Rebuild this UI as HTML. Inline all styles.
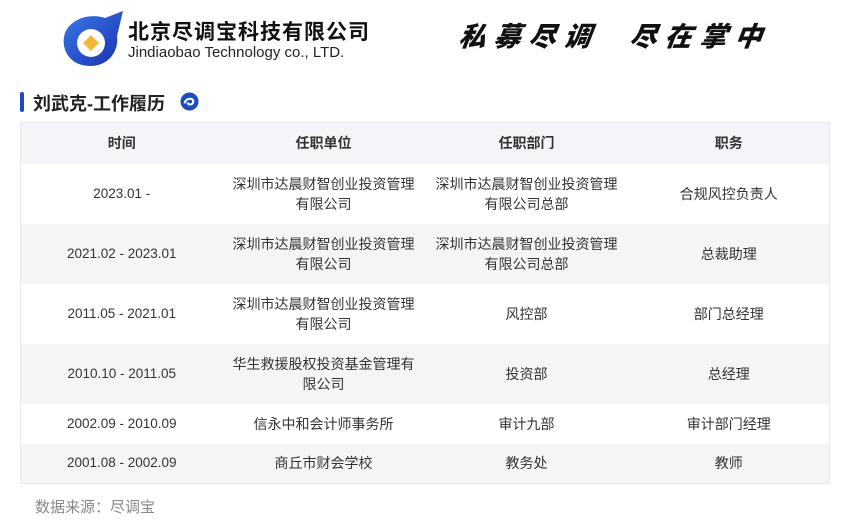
<!DOCTYPE html>
<html><head><meta charset="utf-8"><style>
*{margin:0;padding:0;box-sizing:border-box}
body{width:850px;height:525px;background:#fff;font-family:"Liberation Sans","Noto Sans CJK SC",sans-serif;color:#333;position:relative;overflow:hidden}
.abs{position:absolute;white-space:nowrap}
table{position:absolute;left:20px;top:122px;width:810px;border-collapse:collapse;border:1px solid #e8eaef;font-size:14px}
td,th{text-align:center;vertical-align:middle;line-height:20px;padding:0 4px}
th{height:41px;background:#f4f5f9;font-weight:bold;font-size:14px;color:#333}
tr.r{height:60px}tr.s{height:40px}
tr.g{background:#f5f5f5}
td:nth-child(1){width:202px;font-size:13.5px}td:nth-child(2){width:202px}td:nth-child(3){width:204px}
</style></head><body>
<svg class="abs" style="left:61px;top:10px" width="64" height="58" viewBox="0 0 64 58">
<defs><linearGradient id="lg" x1="0" y1="0" x2="1" y2="1"><stop offset="0" stop-color="#3a7be8"/><stop offset="1" stop-color="#1a2fb0"/></linearGradient></defs>
<path d="M62 1 L44 8 C30 3 10 8 4 23 C-1 38 8 56 29 56 C47 56 58 42 56 26 Z" fill="url(#lg)"/>
<circle cx="30" cy="33" r="14" fill="#fff"/>
<path d="M30 25 L38 33 L30 41 L22 33 Z" fill="#f5b73a"/>
</svg>
<div class="abs" style="left:128px;top:21px;font-size:21px;line-height:24px;font-weight:bold;color:#111;letter-spacing:1px">北京尽调宝科技有限公司</div>
<div class="abs" style="left:128px;top:44px;font-size:15px;line-height:17px;color:#222">Jindiaobao Technology co., LTD.</div>
<div class="abs" style="left:459px;top:21px;font-size:27px;line-height:32px;font-weight:900;font-style:italic;color:#111;letter-spacing:8px;transform:skewX(-8deg)">私募尽调&nbsp;&nbsp;尽在掌中</div>
<div class="abs" style="left:20px;top:92px;width:4px;height:20px;background:#1e4bbf;border-radius:2px"></div>
<div class="abs" style="left:33px;top:90px;font-size:18px;font-weight:bold;color:#222">刘武克-工作履历</div>
<svg class="abs" style="left:180px;top:92px" width="19" height="19" viewBox="0 0 20 20"><circle cx="10" cy="10" r="9.5" fill="#1e4bbf"/><path d="M5 12 C5 7 14 5 14 10 C14 14 8 14 8 11" stroke="#fff" stroke-width="2.2" fill="none"/></svg>
<table>
<tr><th>时间</th><th>任职单位</th><th>任职部门</th><th>职务</th></tr>
<tr class="r"><td>2023.01 -</td><td>深圳市达晨财智创业投资管理<br>有限公司</td><td>深圳市达晨财智创业投资管理<br>有限公司总部</td><td>合规风控负责人</td></tr>
<tr class="r g"><td>2021.02 - 2023.01</td><td>深圳市达晨财智创业投资管理<br>有限公司</td><td>深圳市达晨财智创业投资管理<br>有限公司总部</td><td>总裁助理</td></tr>
<tr class="r"><td>2011.05 - 2021.01</td><td>深圳市达晨财智创业投资管理<br>有限公司</td><td>风控部</td><td>部门总经理</td></tr>
<tr class="r g"><td>2010.10 - 2011.05</td><td>华生救援股权投资基金管理有<br>限公司</td><td>投资部</td><td>总经理</td></tr>
<tr class="s"><td>2002.09 - 2010.09</td><td>信永中和会计师事务所</td><td>审计九部</td><td>审计部门经理</td></tr>
<tr class="s g"><td>2001.08 - 2002.09</td><td>商丘市财会学校</td><td>教务处</td><td>教师</td></tr>
</table>
<div class="abs" style="left:35px;top:496px;font-size:15px;color:#888">数据来源：尽调宝</div>
</body></html>
